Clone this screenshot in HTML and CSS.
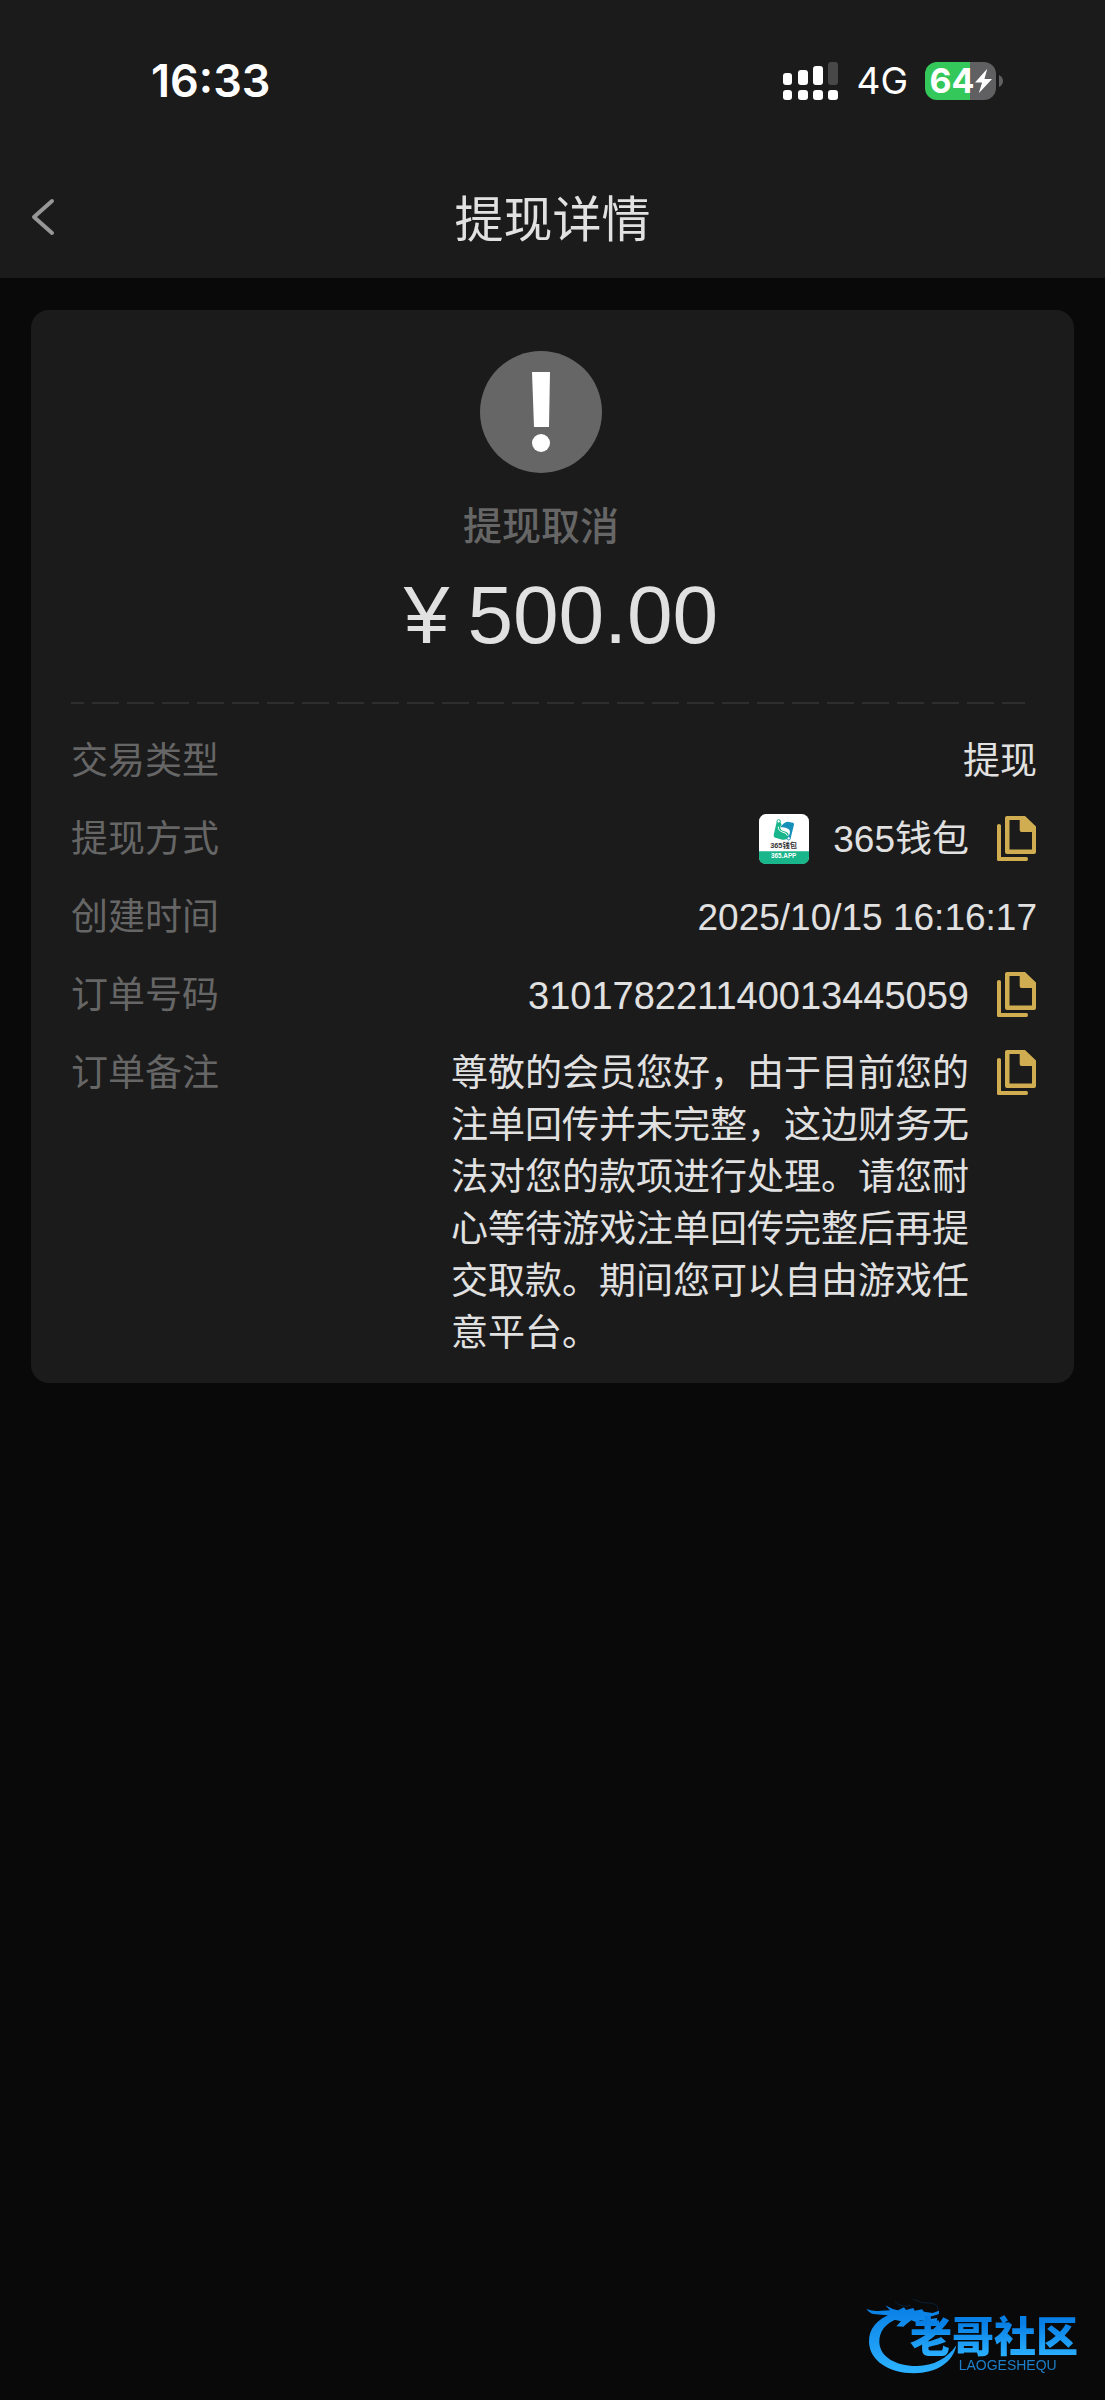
FILE: index.html
```html
<!DOCTYPE html>
<html lang="zh-CN">
<head>
  <meta charset="UTF-8">
  <meta name="viewport" content="width=device-width, initial-scale=1.0">
  <title>提现详情</title>
  <link rel="stylesheet" href="styles.css">
</head>
<body>
  <svg width="0" height="0" class="sprite">
    <symbol id="copy" viewBox="0 0 39 45">
      <path fill-rule="evenodd" d="M10 0H28L39 10.500V36Q39 38 37 38H10Q8 38 8 36V2Q8 0 10 0ZM12.500 4V33.500H35V16H24.500Q22.700 16 22.700 14V4Z"/>
      <path d="M0 9.500Q0 8 2 8T4 9.500V41H29.500Q31 41 31 43T29.500 45H1.500Q0 45 0 43.500Z"/>
    </symbol>
  </svg>

  <header class="header">
    <div class="status-bar">
      <span class="time">16:33</span>
      <div class="status-right">
        <svg class="signal" viewBox="0 0 55 38">
          <g fill="#fff">
            <rect x="0" y="11" width="9" height="12" rx="3"/>
            <rect x="15" y="8" width="10" height="15" rx="3"/>
            <rect x="30" y="4" width="10" height="19" rx="3"/>
            <rect x="0" y="28" width="9" height="10" rx="3"/>
            <rect x="15" y="28" width="10" height="10" rx="3"/>
            <rect x="30" y="28" width="10" height="10" rx="3"/>
            <rect x="45" y="28" width="10" height="10" rx="3"/>
          </g>
          <rect x="45" y="0" width="10" height="23" rx="3" fill="#484848"/>
        </svg>
        <span class="network">4G</span>
        <div class="battery">
          <div class="battery-body">
            <span>64</span>
            <svg class="bolt" viewBox="0 0 18 26"><path d="M13 0L0 14.500H7.500L4 26L18 11H10Z" fill="#fff"/></svg>
          </div>
          <svg class="battery-cap" viewBox="0 0 4 12"><path d="M0 0Q4 2 4 6T0 12Z" fill="#606062"/></svg>
        </div>
      </div>
    </div>
    <nav class="nav">
      <button class="back" aria-label="返回">
        <svg viewBox="0 0 24 38"><path d="M21 3L3 19L21 35" fill="none" stroke="#979797" stroke-width="4" stroke-linecap="round" stroke-linejoin="round"/></svg>
      </button>
      <h1>提现详情</h1>
    </nav>
  </header>

  <main class="card">
    <div class="state">
      <svg class="state-icon" viewBox="0 0 122 122">
        <circle cx="61" cy="61" r="61" fill="#666"/>
        <path d="M52 21H70L69 76H54Z" fill="#fff"/>
        <circle cx="61" cy="92" r="9" fill="#fff"/>
      </svg>
      <p class="state-text">提现取消</p>
    </div>
    <p class="amount"><span>¥</span><span>500.00</span></p>
    <div class="divider"></div>

    <dl class="details">
      <div class="row">
        <dt>交易类型</dt>
        <dd>提现</dd>
      </div>
      <div class="row">
        <dt>提现方式</dt>
        <dd>
          <svg class="wallet" viewBox="0 0 150 150">
            <rect width="150" height="150" rx="22" fill="#fff"/>
            <path d="M0 112H150V128Q150 150 128 150H22Q0 150 0 128Z" fill="#19b58b"/>
            <path d="M53 24L44 62Q43 69 49 71L70 77Q88 78 89 65Q89 55 76 52Q64 49 64 42Q64 36 68 32L63 22Z" fill="#19b58b"/>
            <path d="M58 38Q57 50 70 54Q84 57 85 65" fill="none" stroke="#fff" stroke-width="3"/>
            <circle cx="59" cy="22" r="5" fill="#fff" stroke="#19b58b" stroke-width="3"/>
            <path d="M66 37Q74 25 86 23L102 26Q106 27 105 32L95 72L88 68Q98 52 88 45Q78 38 66 40Z" fill="#168fb9"/>
            <circle cx="89" cy="73" r="5" fill="#fff" stroke="#168fb9" stroke-width="3"/>
            <text x="74" y="103" class="wallet-name">365钱包</text>
            <text x="74" y="133" class="wallet-app">365.APP</text>
          </svg>
          <span class="value">365钱包</span>
          <button class="copy" aria-label="复制提现方式"><svg><use href="#copy"/></svg></button>
        </dd>
      </div>
      <div class="row">
        <dt>创建时间</dt>
        <dd>2025/10/15 16:16:17</dd>
      </div>
      <div class="row">
        <dt>订单号码</dt>
        <dd>
          <span class="value number">310178221140013445059</span>
          <button class="copy" aria-label="复制订单号码"><svg><use href="#copy"/></svg></button>
        </dd>
      </div>
      <div class="row">
        <dt>订单备注</dt>
        <dd>
          <span class="value note">尊敬的会员您好，由于目前您的注单回传并未完整，这边财务无法对您的款项进行处理。请您耐心等待游戏注单回传完整后再提交取款。期间您可以自由游戏任意平台。</span>
          <button class="copy" aria-label="复制订单备注"><svg><use href="#copy"/></svg></button>
        </dd>
      </div>
    </dl>
  </main>

  <svg class="watermark" viewBox="0 0 765 360">
    <defs>
      <linearGradient id="blue" gradientUnits="userSpaceOnUse" x1="0" y1="80" x2="0" y2="270">
        <stop offset="0" stop-color="#087fe5"/>
        <stop offset="1" stop-color="#2bb0ff"/>
      </linearGradient>
      <linearGradient id="blueText" gradientUnits="userSpaceOnUse" x1="0" y1="130" x2="0" y2="230">
        <stop offset="0" stop-color="#087fe5"/>
        <stop offset="1" stop-color="#2bb0ff"/>
      </linearGradient>
    </defs>
    <g fill="url(#blue)">
      <path d="M128 100C78 118 56 148 57 187C59 242 116 280 192 280C258 279 309 249 319 196C291 237 248 259 198 258C137 257 91 231 88 188C87 154 106 130 146 114Z"/>
      <path d="M50 87Q70 95 92 92L120 91L106 76Q126 88 144 91L162 82L168 90L190 84L194 92L216 88L222 95L248 99L267 92V102L246 109L226 108L240 117L262 114L259 127L246 131L232 125L212 120L198 126L184 121L170 131L160 140L139 139L153 124L128 118L112 106L70 102Q56 98 50 87Z"/>
    </g>
    <path d="M135 64Q148 82 182 77M190 58Q218 72 247 70Q267 76 264 91" fill="none" stroke="#0c2033" stroke-width="3"/>
    <text x="180" y="216" class="mark-name">老哥社区</text>
    <text x="326" y="270" class="mark-latin">LAOGESHEQU</text>
  </svg>
</body>
</html>
```
FILE: styles.css
```css
* {
  box-sizing: border-box;
}
body {
  margin: 0;
  min-height: 100vh;
  background: #090909;
  color: #e1e1e1;
  font-family: "Liberation Sans", "Noto Sans CJK SC", sans-serif;
  font-size: 37px;
  line-height: 52px;
}
svg {
  display: block;
}
button {
  padding: 0;
  border: none;
  background: none;
  cursor: pointer;
}
h1, p, dl, dd {
  margin: 0;
}
.sprite {
  position: absolute;
}

.header {
  background: #1b1b1b;
}
.status-bar {
  display: flex;
  justify-content: space-between;
  align-items: center;
  height: 162px;
  padding: 0 102px 0 151px;
  color: #fff;
  font-family: Inter, sans-serif;
}
.time {
  font-size: 45px;
  font-weight: 600;
}
.status-right {
  display: flex;
  align-items: center;
}
.signal {
  width: 55px;
  height: 38px;
}
.network {
  margin: 0 17px 0 18px;
  font-size: 37px;
}
.battery {
  display: flex;
  align-items: center;
  gap: 3px;
}
.battery-body {
  display: flex;
  align-items: center;
  justify-content: center;
  width: 71px;
  height: 38px;
  border-radius: 12px;
  background: linear-gradient(to right, #34c759 64%, #606062 64%);
  font-size: 34px;
  font-weight: 700;
}
.bolt {
  width: 17px;
  height: 26px;
}
.battery-cap {
  width: 4px;
  height: 12px;
}

.nav {
  position: relative;
  display: flex;
  align-items: center;
  justify-content: center;
  height: 116px;
}
.nav h1 {
  font-size: 49px;
  font-weight: 400;
}
.back {
  position: absolute;
  top: 36px;
  left: 31px;
}
.back svg {
  width: 24px;
  height: 38px;
}

.card {
  margin: 32px 31px;
  padding: 41px 37px 23px 40px;
  border-radius: 18px;
  background: #1b1b1b;
}
.state {
  display: flex;
  flex-direction: column;
  align-items: center;
  gap: 28px;
  padding-right: 26px;
}
.state-icon {
  width: 122px;
  height: 122px;
}
.state-text {
  color: #666;
  font-size: 39px;
  font-weight: 500;
}
.amount {
  display: flex;
  justify-content: center;
  gap: 18px;
  margin-top: 14px;
  padding-left: 14px;
  font-size: 82px;
  line-height: 96px;
}
.divider {
  height: 2px;
  margin: 39px 12px 32px 0;
  background: repeating-linear-gradient(to right, #2e2e2e 0 13px, transparent 13px 21px, #2e2e2e 21px 35px);
}

.details {
  display: flex;
  flex-direction: column;
  gap: 26px;
}
.row {
  display: flex;
  justify-content: space-between;
}
dt {
  color: #666;
}
dd {
  display: flex;
  align-items: flex-start;
}
.wallet {
  width: 50px;
  height: 50px;
  margin-right: 24px;
}
.wallet-name {
  fill: #333;
  font-size: 22px;
  font-weight: 700;
  text-anchor: middle;
}
.wallet-app {
  fill: #fff;
  font-size: 19px;
  font-weight: 700;
  text-anchor: middle;
}
.number {
  font-size: 38px;
}
.note {
  width: 14em;
}
.copy {
  display: flex;
  height: 52px;
  padding-top: 2px;
  margin: 0 1px 0 28px;
}
.copy svg {
  width: 39px;
  height: 45px;
  fill: #d0ad50;
}

/* site mark, stays in the corner over the page */
.watermark {
  position: fixed;
  right: 0;
  bottom: 0;
  width: 255px;
  height: 120px;
}
.mark-name {
  fill: url(#blueText);
  font-family: "Noto Sans CJK SC", sans-serif;
  font-size: 126px;
  font-weight: 900;
}
.mark-latin {
  fill: #1d7fc9;
  font-size: 42px;
}
```
